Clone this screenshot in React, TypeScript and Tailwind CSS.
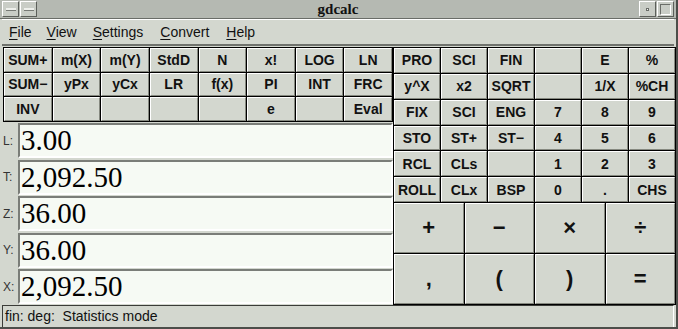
const leftKeys = [
  ['SUM+', 'm(X)', 'm(Y)', 'StdD', 'N', 'x!', 'LOG', 'LN'],
  ['SUM−', 'yPx', 'yCx', 'LR', 'f(x)', 'PI', 'INT', 'FRC'],
  ['INV', '', '', '', '', 'e', '', 'Eval'],
];

const rightKeys = [
  ['PRO', 'SCI', 'FIN', '', 'E', '%'],
  ['y^X', 'x2', 'SQRT', '', '1/X', '%CH'],
  ['FIX', 'SCI', 'ENG', '7', '8', '9'],
  ['STO', 'ST+', 'ST−', '4', '5', '6'],
  ['RCL', 'CLs', '', '1', '2', '3'],
  ['ROLL', 'CLx', 'BSP', '0', '.', 'CHS'],
];

const registers = [
  ['L:', '3.00'],
  ['T:', '2,092.50'],
  ['Z:', '36.00'],
  ['Y:', '36.00'],
  ['X:', '2,092.50'],
];

const menus = ['File', 'View', 'Settings', 'Convert', 'Help'];
const menuGaps = ['mr-[15px]', 'mr-[16px]', 'mr-[17px]', 'mr-[17px]', ''];

function Key({ label, big }: { label: string; big?: boolean }) {
  return (
    <button
      className={
        'w-full h-full flex items-center justify-center bg-[#d3d7cf] border-t border-l border-white border-r border-b border-r-[#85887f] border-b-[#85887f] text-[#111] font-bold leading-none ' +
        (big ? 'text-[22px]' : 'text-[14px]')
      }
    >
      {label}
    </button>
  );
}

function TitleButton({ kind }: { kind: 'bar' | 'dot' | 'box' }) {
  return (
    <div className="w-[17px] h-[16px] bg-[#c9cdc6] border border-t-white border-l-white border-r-[#5c5f5a] border-b-[#5c5f5a] flex items-center justify-center">
      {kind === 'bar' && <div className="w-[10px] h-[3px] bg-[#eef0ec] border-b border-[#777a75]" />}
      {kind === 'dot' && <div className="w-[3px] h-[3px] bg-[#f5f5f5] border border-[#6a6d68]" />}
      {kind === 'box' && <div className="w-[11px] h-[11px] border border-t-[#6a6d68] border-l-[#6a6d68] border-r-white border-b-white" />}
    </div>
  );
}

export default function App() {
  return (
    <div className="w-[678px] h-[329px] bg-[#d3d7cf] flex flex-col overflow-hidden border-r-2 border-b-2 border-[#4c4e4a] font-['Liberation_Sans',sans-serif] text-[#111]">
      {/* title bar */}
      <div className="h-[19px] bg-[#b5b9b2] border-b border-[#6a6d68] flex items-center px-[2px] shrink-0">
        <div className="flex gap-[1px]">
          <TitleButton kind="bar" />
          <TitleButton kind="bar" />
        </div>
        <div className="flex-1 text-center font-['Liberation_Serif',serif] font-bold text-[15px] leading-none">
          gdcalc
        </div>
        <div className="flex gap-[1px]">
          <TitleButton kind="dot" />
          <TitleButton kind="box" />
        </div>
      </div>

      {/* menu bar */}
      <div className="h-[27px] shrink-0 flex items-center border-t border-white border-b-2 border-b-[#6f726d] mx-[2px] pl-[7px] text-[14px]">
        {menus.map((m, i) => (
          <span key={m} className={menuGaps[i]}>
            <span className="underline underline-offset-2">{m[0]}</span>
            {m.slice(1)}
          </span>
        ))}
      </div>

      {/* body */}
      <div className="h-[259px] shrink-0 flex pl-[3px] pt-px">
        <div className="w-[390px] flex flex-col">
          <div className="h-[75px] grid grid-cols-8 grid-rows-3 gap-px bg-black border border-black">
            {leftKeys.flat().map((k, i) => (
              <Key key={i} label={k} />
            ))}
          </div>
          <div className="flex-1 flex flex-col justify-between py-px">
            {registers.map(([l, v]) => (
              <div key={l} className="flex items-stretch h-[35px]">
                <div className="w-[15px] flex items-center text-[12px] text-[#333]">{l}</div>
                <div className="flex-1 bg-[#f6faf4] border-2 border-t-[#7a7d78] border-l-[#7a7d78] border-r-white border-b-white flex items-center pl-[1px] font-['Liberation_Serif',serif] text-[29px] leading-none text-black">
                  {v}
                </div>
              </div>
            ))}
          </div>
        </div>

        <div className="flex-1 flex flex-col">
          <div className="h-[156px] grid grid-cols-6 grid-rows-6 gap-px bg-black border border-black">
            {rightKeys.flat().map((k, i) => (
              <Key key={i} label={k} />
            ))}
          </div>
          <div className="flex-1 flex flex-col gap-px bg-black border-x border-b border-black">
            <div className="flex-1 flex gap-px">
              {['+', '−', '×', '÷'].map((k) => (
                <div key={k} className="flex-1 flex">
                  <Key label={k} big />
                </div>
              ))}
            </div>
            <div className="flex-1 flex gap-px">
              {[',', '(', ')', '='].map((k) => (
                <div key={k} className="flex-1 flex">
                  <Key label={k} big />
                </div>
              ))}
            </div>
          </div>
        </div>
      </div>

      {/* status bar */}
      <div className="flex-1 mx-[2px] mb-[2px] border border-t-[#3a3c38] border-l-[#3a3c38] border-r-white border-b-white flex items-center pl-[2px] text-[14px] whitespace-pre">
        fin: deg:  Statistics mode
      </div>
    </div>
  );
}
